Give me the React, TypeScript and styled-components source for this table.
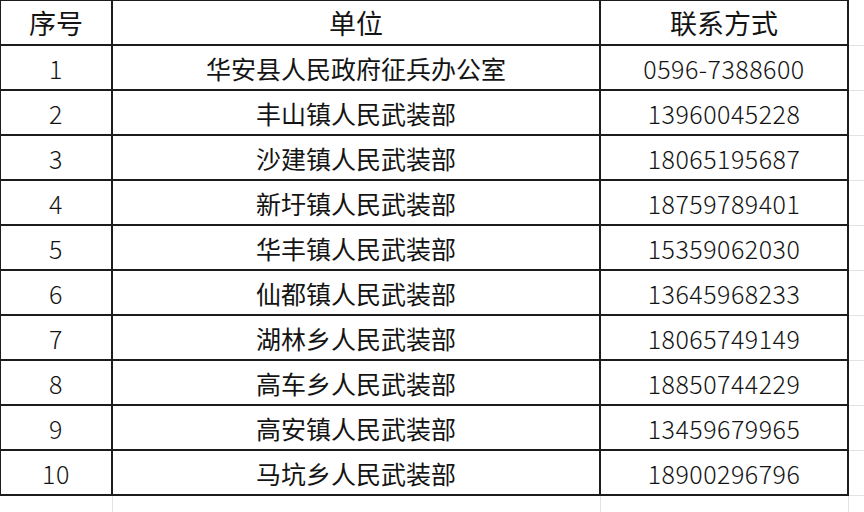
import React from "react";
import styled, { createGlobalStyle } from "styled-components";

const Global = createGlobalStyle`
  html, body { margin: 0; padding: 0; background: #ffffff; }
  body { font-family: "Noto Sans CJK SC", "Noto Sans", sans-serif; }
  #root { width: 864px; height: 512px; overflow: hidden; }
`;

const Sheet = styled.div`
  display: grid;
  grid-template-columns: 113px 488px 248px 1fr;
  grid-template-rows: 46px repeat(10, 45px) 1fr;
  width: 864px;
  height: 512px;
  background: #ffffff;
`;

type Kind = "head" | "body";

const Cell = styled.div<{ $kind: Kind; $first?: boolean; $num?: boolean }>`
  box-sizing: border-box;
  display: flex;
  align-items: center;
  justify-content: center;
  color: #141414;
  font-family: "Noto Sans CJK SC", "Noto Sans", sans-serif;
  font-size: ${(p) => (p.$kind === "head" ? "27px" : "25px")};
  font-weight: ${(p) => (p.$num ? 300 : 400)};
  letter-spacing: ${(p) => (p.$num ? "0.5px" : "0")};
  line-height: 1;
  white-space: nowrap;
  border-right: 2px solid #1c1c1c;
  border-bottom: 2px solid #1c1c1c;
  border-left: ${(p) => (p.$first ? "1px solid #1c1c1c" : "none")};
  border-top: ${(p) => (p.$kind === "head" ? "1px solid #1c1c1c" : "none")};
  padding-top: ${(p) => (p.$kind === "head" ? "0" : "1px")};
`;

const Pad = styled.div<{ $bottom?: boolean; $right?: boolean }>`
  box-sizing: border-box;
  border-bottom: ${(p) => (p.$bottom ? "1px solid #e3e3e3" : "none")};
  border-right: ${(p) => (p.$right ? "1px solid #e3e3e3" : "none")};
`;

const rows: [string, string, string][] = [
  ["1", "华安县人民政府征兵办公室", "0596-7388600"],
  ["2", "丰山镇人民武装部", "13960045228"],
  ["3", "沙建镇人民武装部", "18065195687"],
  ["4", "新圩镇人民武装部", "18759789401"],
  ["5", "华丰镇人民武装部", "15359062030"],
  ["6", "仙都镇人民武装部", "13645968233"],
  ["7", "湖林乡人民武装部", "18065749149"],
  ["8", "高车乡人民武装部", "18850744229"],
  ["9", "高安镇人民武装部", "13459679965"],
  ["10", "马坑乡人民武装部", "18900296796"],
];

export default function App() {
  return (
    <>
      <Global />
      <Sheet>
        <Cell $kind="head" $first>序号</Cell>
        <Cell $kind="head">单位</Cell>
        <Cell $kind="head">联系方式</Cell>
        <Pad $bottom />
        {rows.map(([n, unit, phone]) => (
          <React.Fragment key={n}>
            <Cell $kind="body" $first $num>{n}</Cell>
            <Cell $kind="body">{unit}</Cell>
            <Cell $kind="body" $num>{phone}</Cell>
            <Pad $bottom />
          </React.Fragment>
        ))}
        <Pad $right />
        <Pad $right />
        <Pad $right />
        <Pad />
      </Sheet>
    </>
  );
}
